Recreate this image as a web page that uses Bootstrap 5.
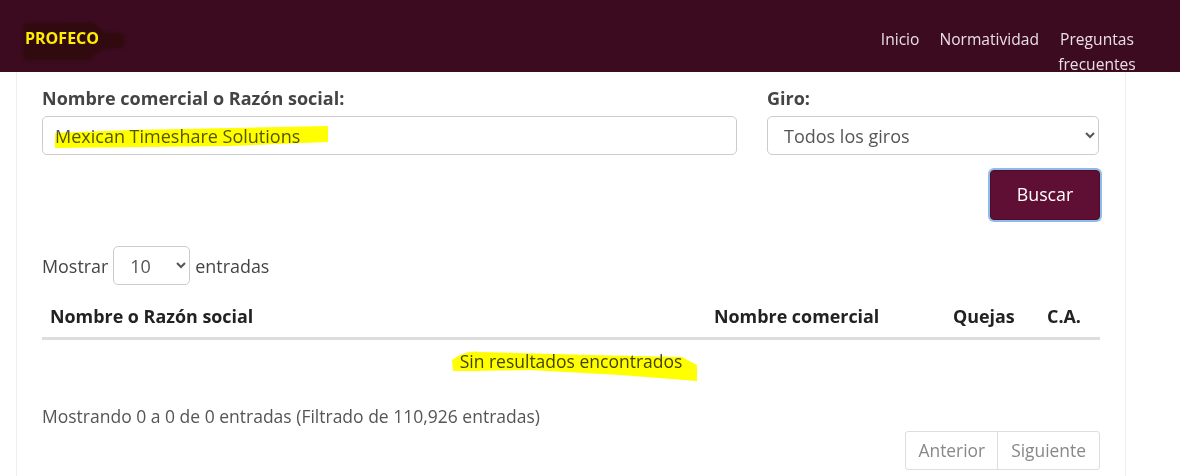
<!DOCTYPE html>
<html lang="es">
<head>
<meta charset="utf-8">
<title>PROFECO</title>
<link href="https://cdn.jsdelivr.net/npm/bootstrap@5.3.0/dist/css/bootstrap.min.css" rel="stylesheet">
<style>
html,body{height:476px;overflow:hidden}
body{font-family:"Open Sans","Liberation Sans",sans-serif;font-size:18px;color:#444;background:#fff;position:relative}
.topbar{height:72px;background:#3c0b20;overflow:hidden;padding:0 35px 0 25px;align-items:flex-start}
.brandname{font-size:16px;font-weight:700;color:#ffee00;margin-top:27px;line-height:22px;position:relative;z-index:1}
.toplinks{margin-left:auto;padding-top:27px}
.toplinks a{color:#eadfe3;text-decoration:none;font-size:15.6px;line-height:25px;text-align:center;display:block;padding:0 10px}
.toplinks li:last-child a{width:96px;padding:0}
.panel{margin:0 54px 0 16px;height:404px;border-left:1px solid #eee;border-right:1px solid #eee;padding:14px 25px 0 25px}
.fieldlabel{font-weight:700;font-size:18px;line-height:25px;margin-bottom:5px;color:#444;display:block}
.panel .form-control,.panel .form-select{height:39px;font-size:18px;color:#555;border-color:#ccc;border-radius:5px;padding:0 12px}
.panel .form-select{padding-left:12px;appearance:auto;-webkit-appearance:auto;background-image:none}
.namecol{width:695px}
.girocol{width:332px;margin-left:30px}
.searchbtn{width:110px;height:50px;padding:0 0 2px;background:#5f0f33;color:#fff;font-size:17.8px;border:1px solid #4a0c28;border-radius:4px;margin:15px 0 0 0;box-shadow:0 0 0 2px #8fbbe8}
.lenrow{margin-top:26px;height:39px;gap:5px;font-size:17.9px}
.lenrow span{padding-top:2px}
.panel .lensel{width:77px;padding-left:12px;font-size:18px}
.restable{width:1058px;margin:12px 0 0;table-layout:fixed}
.restable th{font-size:17.9px;font-weight:700;color:#222;padding:0 8px;height:41px;line-height:23px;border-bottom:3px solid #ddd;vertical-align:middle}
.restable td{text-align:center;font-size:17.5px;border:0;padding:9px 8px;line-height:25px;color:#444}
.summary{font-size:17.5px;margin-top:21px;line-height:24px;color:#555}
.pagerrow{margin-top:3px;width:1058px}
.pagerrow .page-link{font-size:17.4px;color:#888;border-color:#ddd;padding:6px 13px;line-height:25px;background:#fff;border-radius:0}
.pagerrow .page-item:first-child .page-link{border-radius:3px 0 0 3px;padding-right:12px;padding-left:12px}
.pagerrow .page-item:last-child .page-link{border-radius:0 3px 3px 0}
.inkmarks{position:absolute;left:0;top:0;pointer-events:none}
.blotch{filter:blur(1.5px)}
.blend{mix-blend-mode:multiply}
</style>
</head>
<body>
<nav class="topbar d-flex">
  <span class="brandname">PROFECO</span>
  <ul class="toplinks list-unstyled d-flex">
    <li><a href="#">Inicio</a></li>
    <li><a href="#">Normatividad</a></li>
    <li><a href="#">Preguntas frecuentes</a></li>
  </ul>
</nav>
<main class="panel">
  <form class="d-flex">
    <div class="namecol">
      <label class="fieldlabel" for="nm">Nombre comercial o Razón social:</label>
      <input id="nm" class="form-control" type="text" value="Mexican Timeshare Solutions">
    </div>
    <div class="girocol">
      <label class="fieldlabel" for="gr">Giro:</label>
      <select id="gr" class="form-select"><option>Todos los giros</option></select>
    </div>
  </form>
  <div class="d-flex justify-content-end" style="width:1058px">
    <button class="btn searchbtn" type="button">Buscar</button>
  </div>
  <div class="d-flex align-items-center lenrow">
    <span>Mostrar</span>
    <select class="form-select lensel"><option>10</option></select>
    <span>entradas</span>
  </div>
  <table class="table restable">
    <thead><tr>
      <th style="width:664px">Nombre o Razón social</th>
      <th style="width:239px">Nombre comercial</th>
      <th style="width:94px">Quejas</th>
      <th>C.A.</th>
    </tr></thead>
    <tbody><tr><td colspan="4">Sin resultados encontrados</td></tr></tbody>
  </table>
  <div class="summary">Mostrando 0 a 0 de 0 entradas (Filtrado de 110,926 entradas)</div>
  <div class="d-flex justify-content-end pagerrow">
    <ul class="pagination mb-0">
      <li class="page-item disabled"><a class="page-link" href="#">Anterior</a></li>
      <li class="page-item disabled"><a class="page-link" href="#">Siguiente</a></li>
    </ul>
  </div>
</main>
<svg class="inkmarks" width="1180" height="476" viewBox="0 0 1180 476">
  <path class="blotch" d="M26 26 L92 25 L102 34 L122 36 L122 45 L100 47 L88 58 L26 58 Z" fill="#300a0e" stroke="#300a0e" stroke-width="5" stroke-linejoin="round"/>
  <g class="blend" fill="#ffff00">
    <path d="M55 133 L130 130 L328 126 L328 142 L230 146 L55 148 Z"/>
    <path d="M460 355 Q470 350 480 352 L590 355 L682 357 L697 365 L697 381 L620 375 L530 370 L475 371 L453 371 L452 360 Z"/>
  </g>
</svg>
</body>
</html>
